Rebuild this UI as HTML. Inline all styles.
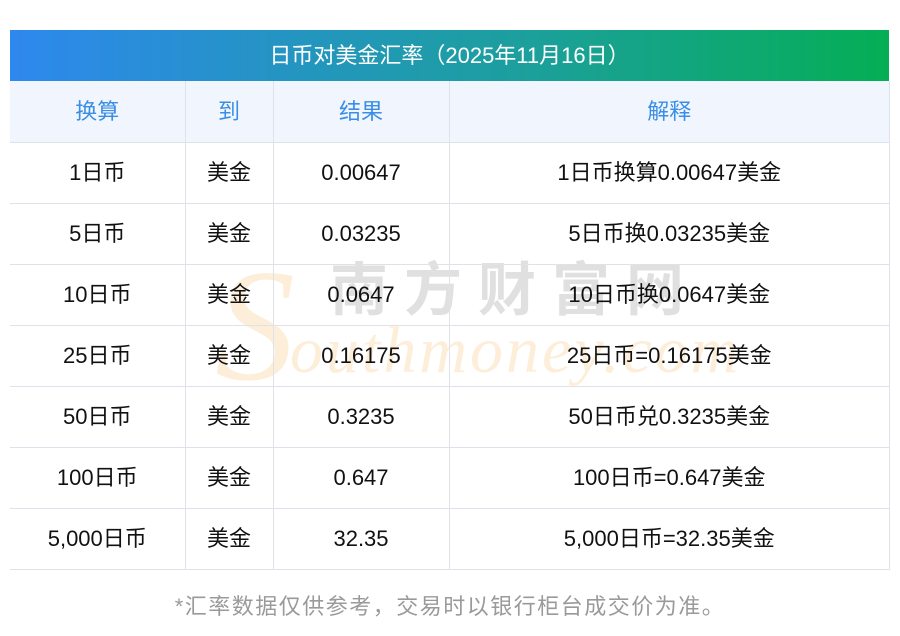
<!DOCTYPE html>
<html><head><meta charset="utf-8"><style>
body{margin:0;width:900px;height:636px;background:#fff;font-family:"Liberation Sans","Noto Sans CJK SC",sans-serif;position:relative;overflow:hidden}
.title{position:absolute;left:10px;top:30px;width:879px;height:51px;background:linear-gradient(90deg,#2e88ee,#1ba09a 60%,#05ae55);color:#fff;font-size:22px;line-height:51px;text-align:center}
table{position:absolute;left:10px;top:81px;width:880px;border-collapse:collapse;font-size:22px;color:#111}
td{border:1px solid #dfe2ea;height:60px;line-height:60px;padding:0;text-align:center;vertical-align:middle}
tr:first-child td{background:#f1f6fe;color:#3a8ee6;border-top:none;height:61px}
tr td:first-child{border-left:none}
.wm{position:absolute;pointer-events:none}
.foot{position:absolute;left:0;width:900px;top:589px;text-align:center;color:#9a9a9a;font-size:22px;letter-spacing:1.5px}
</style></head><body>
<div class="title">日币对美金汇率（2025年11月16日）</div>
<div class="wm" style="left:215px;top:245px;font-family:'Liberation Serif',serif;font-style:italic;font-size:160px;color:#fdeeda;line-height:1">S</div>
<div class="wm" style="left:330px;top:262px;font-size:58px;color:#e0e0e0;letter-spacing:16px;font-weight:bold;line-height:1">南方财富网</div>
<div class="wm" style="left:290px;top:318px;font-family:'Liberation Serif',serif;font-style:italic;font-size:66px;color:#fdeeda;letter-spacing:3px;line-height:1">outhmoney.com</div>
<table>
<colgroup><col style="width:175px"><col style="width:88px"><col style="width:176px"><col></colgroup>
<tr><td>换算</td><td>到</td><td>结果</td><td>解释</td></tr>
<tr><td>1日币</td><td>美金</td><td>0.00647</td><td>1日币换算0.00647美金</td></tr>
<tr><td>5日币</td><td>美金</td><td>0.03235</td><td>5日币换0.03235美金</td></tr>
<tr><td>10日币</td><td>美金</td><td>0.0647</td><td>10日币换0.0647美金</td></tr>
<tr><td>25日币</td><td>美金</td><td>0.16175</td><td>25日币=0.16175美金</td></tr>
<tr><td>50日币</td><td>美金</td><td>0.3235</td><td>50日币兑0.3235美金</td></tr>
<tr><td>100日币</td><td>美金</td><td>0.647</td><td>100日币=0.647美金</td></tr>
<tr><td>5,000日币</td><td>美金</td><td>32.35</td><td>5,000日币=32.35美金</td></tr>
</table>
<div class="foot">*汇率数据仅供参考，交易时以银行柜台成交价为准。</div>
</body></html>
